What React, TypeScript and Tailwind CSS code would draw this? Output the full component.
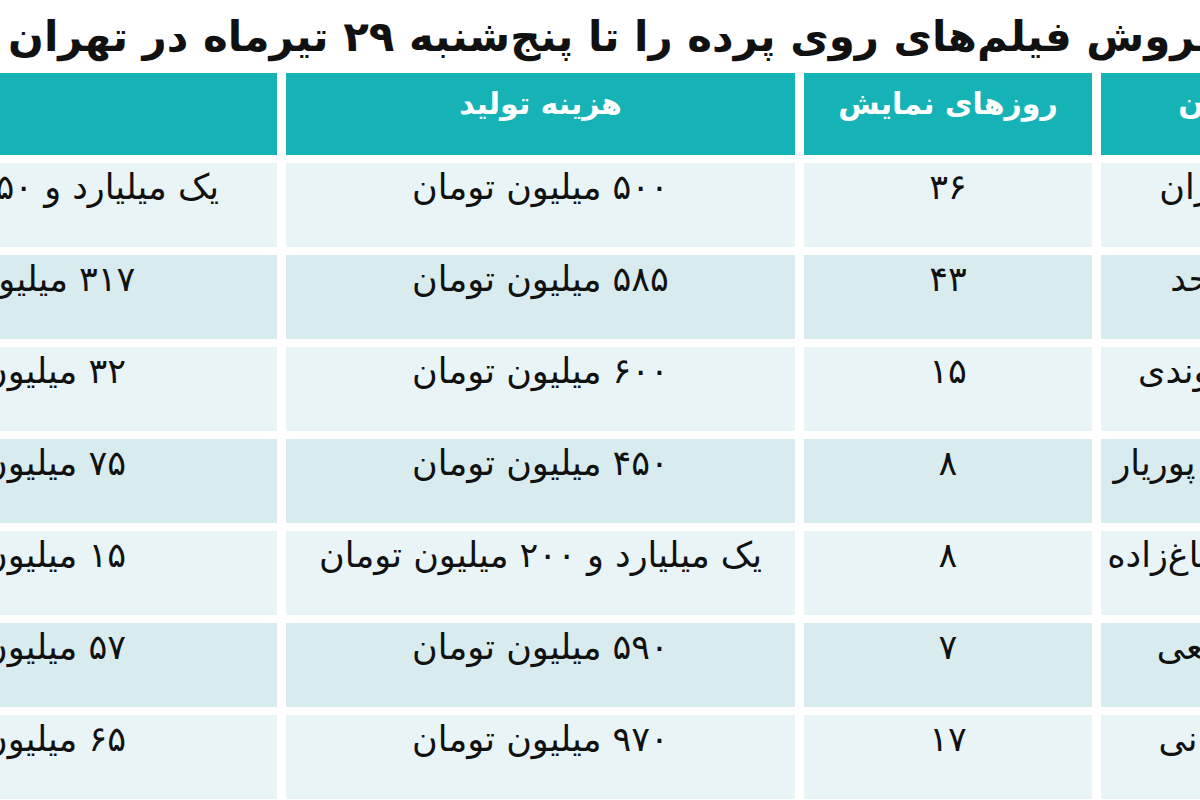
const headers = ["کارگردان", "روزهای نمایش", "هزینه تولید", ""];

const rows = [
  { name: "حمید مهران", days: "۳۶", cost: "۵۰۰ میلیون تومان", sale: "یک میلیارد و ۵۰ میلیون تومان" },
  { name: "علی موحد", days: "۴۳", cost: "۵۸۵ میلیون تومان", sale: "۳۱۷ میلیون تومان" },
  { name: "مهدی خداوندی", days: "۱۵", cost: "۶۰۰ میلیون تومان", sale: "۳۲ میلیون تومان" },
  { name: "محمدحسین پوریار", days: "۸", cost: "۴۵۰ میلیون تومان", sale: "۷۵ میلیون تومان" },
  { name: "سید کاوه صباغ‌زاده", days: "۸", cost: "یک میلیارد و ۲۰۰ میلیون تومان", sale: "۱۵ میلیون تومان" },
  { name: "علی شفیعی", days: "۷", cost: "۵۹۰ میلیون تومان", sale: "۵۷ میلیون تومان" },
  { name: "علی آتشانی", days: "۱۷", cost: "۹۷۰ میلیون تومان", sale: "۶۵ میلیون تومان" },
];

export default function App() {
  return (
    <div className="w-[1200px] h-[800px] overflow-hidden bg-white font-['DejaVu_Sans',sans-serif] text-[#111]">
      {/* Title, its start is cut off at the right edge */}
      <div dir="rtl" className="w-[1224px] h-[73px] whitespace-nowrap text-[42px] font-bold leading-[73px]">
        فروش فیلم‌های روی پرده را تا پنج‌شنبه ۲۹ تیرماه در تهران
      </div>

      {/* Table, cropped on both sides */}
      <div
        dir="rtl"
        className="ml-[-263px] w-[1652px] grid grid-cols-[288px_288px_509px_540px] gap-x-[9px] gap-y-[8px]"
      >
        {headers.map((h, j) => (
          <div
            key={j}
            className="h-[82px] bg-[#15b3b6] text-white font-bold text-[30px] leading-[44px] pt-[9px] flex justify-center whitespace-nowrap"
          >
            {h}
          </div>
        ))}
        {rows.map((r, i) => {
          const bg = i % 2 === 0 ? "bg-[#e9f4f6]" : "bg-[#d8ebee]";
          return [r.name, r.days, r.cost, r.sale].map((v, j) => (
            <div
              key={`${i}-${j}`}
              className={`${bg} h-[84px] text-[35px] leading-[44px] pt-[2px] flex justify-center whitespace-nowrap`}
            >
              {v}
            </div>
          ));
        })}
      </div>
    </div>
  );
}
